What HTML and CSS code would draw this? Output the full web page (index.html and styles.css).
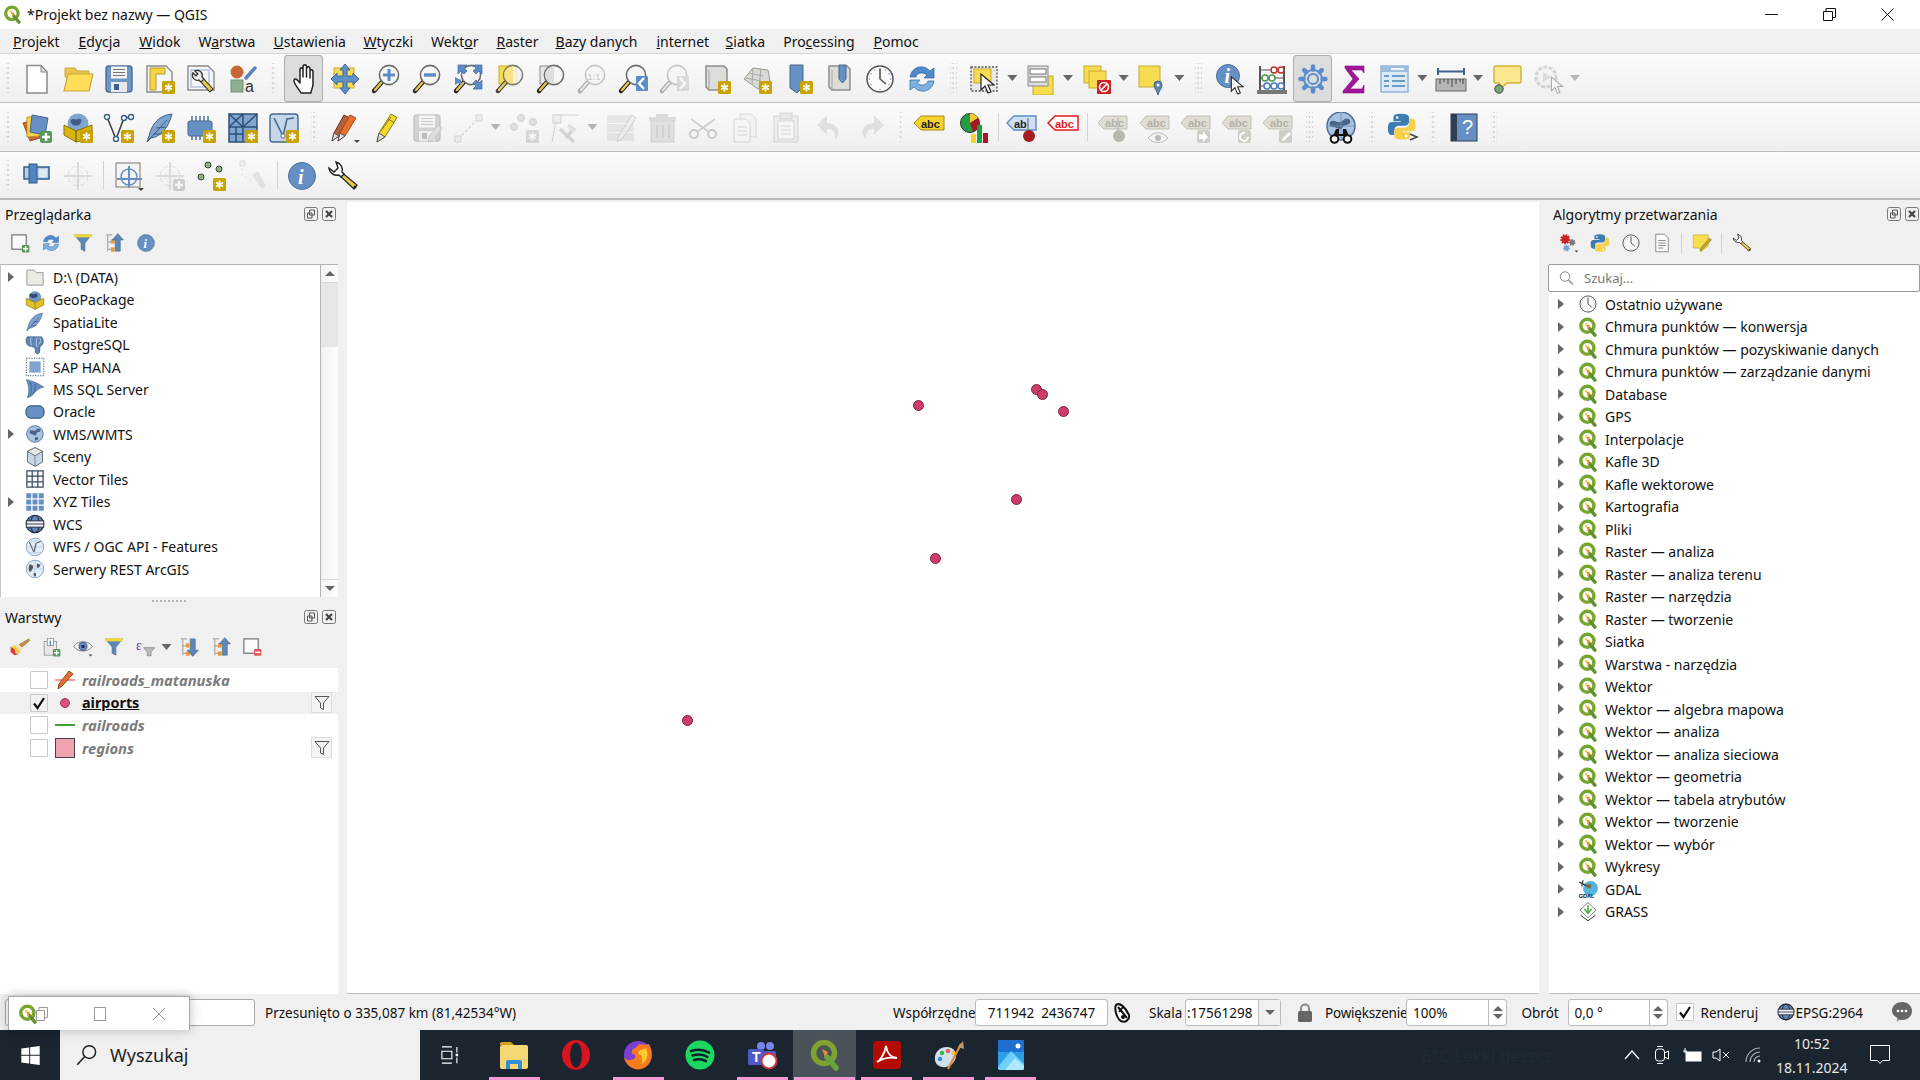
FILE: index.html
```html
<!DOCTYPE html>
<html lang="pl">
<head>
    <meta charset="UTF-8">
    <title>*Projekt bez nazwy — QGIS</title>
    <link rel="stylesheet" href="styles.css">
</head>
<body>
<svg class="sprite" xmlns="http://www.w3.org/2000/svg">
    <defs>
        <g id="g-star"><rect x="18" y="18" width="13" height="13" rx="1.5" fill="#c9a204"/><path d="M24.5 20.5v8M21 22.5l7 4M28 22.5l-7 4" stroke="#fff" stroke-width="1.7"/></g>
        <g id="g-mag"><path d="M12 19l-8 9" stroke="#222" stroke-width="4.4" stroke-linecap="round"/><path d="M11 20l-6 7" stroke="#e6c84c" stroke-width="2.4" stroke-linecap="round"/><circle cx="19" cy="12" r="9.6" fill="#f5f5f3" stroke="#6d6d6d" stroke-width="1.6"/></g>
        <g id="g-cursor"><path d="M17 12v16l4-4 3 7 3-1-3-7h6z" fill="#fff" stroke="#222" stroke-width="1.2"/></g>
        <g id="g-plus"><rect x="19" y="19" width="12" height="12" rx="2" fill="#589a5b"/><path d="M25 21v8M21 25h8" stroke="#fff" stroke-width="2.4"/></g>
        <g id="g-scroll"><path d="M6 3h18l3 3v21H9l-3-3z" fill="#dcdcd8" stroke="#8c8c8c" stroke-width="1.5"/><path d="M6 3v21M9 7v20" stroke="#a4a4a0"/></g>
        <g id="g-tag"><path d="M2 11l6-7h23v13H8z" fill="#e0ddd4" stroke="#c2bfb4"/><text x="9" y="15" class="tag-text" fill="#b3b0a6">abc</text></g>
        <g id="g-globe"><circle cx="16" cy="16" r="12.5" fill="#a8c3e2" stroke="#5a7ea8" stroke-width="1.5"/><path d="M8 11c4-2 5 1 8 0s3-4 7-3c3 2 1 5-2 5s-2 4-4 5-4-2-6-2-4-2-3-5zM17 21c2-1 4 0 4 2s-2 3-4 3-1-4 0-5z" fill="#49658a"/></g>
        <path id="g-caret" d="M25 28h6l-3 3z" fill="#444"/>
    </defs>

    <symbol id="new" viewBox="0 0 32 32"><path d="M6 2.5h14l6 6.5v21H6z" fill="#fff" stroke="#8a8a8a" stroke-width="1.5"/><path d="M20 3v6h6z" fill="#ddd" stroke="#8a8a8a"/></symbol>
    <symbol id="open" viewBox="0 0 32 32"><path d="M3 5h10l2 3h12v6H3z" fill="#e9c64a" stroke="#c9a73d"/><path d="M6 11h25l-4 17H2z" fill="#ffdd58" stroke="#c9a73d" stroke-width="1.2"/></symbol>
    <symbol id="save" viewBox="0 0 32 32"><rect x="3" y="3" width="26" height="26" rx="3" fill="#6e97c6" stroke="#4c6d95" stroke-width="1.4"/><rect x="8" y="3.5" width="16" height="12" fill="#f2f2f2"/><path d="M10 6.5h12M10 9.5h12M10 12.5h12" stroke="#777"/><rect x="8" y="19" width="16" height="10" fill="#e8e8e8"/><rect x="11" y="21" width="5" height="6" fill="#3e5f88"/></symbol>
    <symbol id="layout-new" viewBox="0 0 32 32"><path d="M3 3h19l6 6v20H3z" fill="#f6f6f6" stroke="#8a8a8a" stroke-width="1.4"/><path d="M6 5h15v6H12v16H6z" fill="#f5d547" stroke="#b79a22"/><use href="#g-star"/></symbol>
    <symbol id="layout-mgr" viewBox="0 0 32 32"><path d="M3 3h20l6 6v18H3z" fill="#f6f6f6" stroke="#8a8a8a" stroke-width="1.4"/><rect x="6" y="7" width="18" height="17" fill="none" stroke="#a9c0e2" stroke-width="1.4"/><path d="M10 8a5 5 0 0 1 7 6l11 12-3 3-11-12a5 5 0 0 1-6-7l3 3 2-2z" fill="#e6c84c" stroke="#333" stroke-width="1.1"/><path d="M10 8a5 5 0 0 1 7 6l2 2-3 3-2-2a5 5 0 0 1-6-7l3 3 2-2z" fill="#eee" stroke="#333" stroke-width="1.1"/></symbol>
    <symbol id="styles" viewBox="0 0 32 32"><circle cx="10" cy="9" r="6.5" fill="#c8673a"/><path d="M19 15L28 5" stroke="#5a86bb" stroke-width="3.5" stroke-linecap="round"/><rect x="4" y="17" width="12" height="12" fill="#8fb08e" stroke="#6f9070"/><text x="18" y="29" class="icon-a">a</text></symbol>
    <symbol id="hand" viewBox="-2 0 32 32"><path d="M11 30C9 26 3 20 4 17c1-2 3-1 6 3V7c0-3 3-3 3 0v7-10c0-3 3.5-3 3.5 0v10V6c0-3 3.5-3 3.5 0v9-6c0-3 3-3 3 0v12c0 4-2 6-2 9z" fill="#fff" stroke="#222" stroke-width="1.5" stroke-linejoin="round"/></symbol>
    <symbol id="pan-sel" viewBox="0 0 32 32"><rect x="5" y="5" width="20" height="20" fill="#f7dc4f" stroke="#c7ab30"/><path d="M16 1l5 6h-3v6h6v-3l6 6-6 6v-3h-6v6h3l-5 6-5-6h3v-6H8v3l-6-6 6-6v3h6V7h-3z" fill="#5f90c6" stroke="#3e6a9e"/></symbol>
    <symbol id="zoom-in" viewBox="0 0 32 32"><use href="#g-mag"/><path d="M19 6v12M13 12h12" stroke="#5b8cc6" stroke-width="3"/></symbol>
    <symbol id="zoom-out" viewBox="0 0 32 32"><use href="#g-mag"/><path d="M13 12h12" stroke="#5b8cc6" stroke-width="3.4"/></symbol>
    <symbol id="zoom-full" viewBox="0 0 32 32"><use href="#g-mag"/><path d="M6 2h9l-3 3 3 3-3 3-3-3-3 3V2zM30 2v9l-3-3-3 3-3-3 3-3-3-3zM30 26h-9l3-3-3-3 3-3 3 3 3-3z" fill="#5b8cc6" stroke="#3e6a9e" stroke-width=".7"/><path d="M3 14v8l3-2 3 2v-5z" fill="#5b8cc6"/></symbol>
    <symbol id="zoom-sel" viewBox="0 0 32 32"><rect x="5" y="3" width="18" height="18" fill="#f7dc4f" stroke="#c7ab30"/><use href="#g-mag" opacity=".85"/><path d="M19 3a9 9 0 0 0 0 18z" fill="#f7dc4f" opacity=".6"/></symbol>
    <symbol id="zoom-layer" viewBox="0 0 32 32"><rect x="5" y="3" width="18" height="18" fill="#e6e6e6" stroke="#8a8a8a"/><use href="#g-mag"/><path d="M19 3a9 9 0 0 0 0 18z" fill="#ddd"/></symbol>
    <symbol id="zoom-native" viewBox="0 0 32 32"><use href="#g-mag"/><text x="11.5" y="16.5" class="icon-11">1:1</text></symbol>
    <symbol id="zoom-last" viewBox="0 0 32 32"><use href="#g-mag"/><rect x="19" y="13" width="12" height="15" rx="1" fill="#5b8cc6"/><path d="M27 15l-5 5.5 5 5.5" fill="none" stroke="#fff" stroke-width="2.4"/></symbol>
    <symbol id="zoom-next" viewBox="0 0 32 32"><use href="#g-mag"/><rect x="19" y="13" width="12" height="15" rx="1" fill="#aaa"/><path d="M22 15l5 5.5-5 5.5" fill="none" stroke="#fff" stroke-width="2.4"/></symbol>
    <symbol id="map-new" viewBox="0 0 32 32"><use href="#g-scroll"/><use href="#g-star"/></symbol>
    <symbol id="map-3d" viewBox="0 0 32 32"><path d="M3 16L12 5l15 2 2 11-12 8z" fill="#d9d9d5" stroke="#9a9a96"/><path d="M8 10l14 3M5 15l15 3M12 5l-1 17M20 6l-2 19" stroke="#a8a8a4"/><use href="#g-star"/></symbol>
    <symbol id="bm-new" viewBox="0 0 32 32"><path d="M8 2h13v22l-6 6-7-5z" fill="#6690c4" stroke="#44678f"/><use href="#g-star"/></symbol>
    <symbol id="bm-show" viewBox="0 0 32 32"><use href="#g-scroll"/><path d="M16 2h7v14l-3.5 4-3.5-4z" fill="#6690c4" stroke="#44678f"/></symbol>
    <symbol id="clock" viewBox="0 0 32 32"><circle cx="16" cy="16" r="13" fill="#fafafa" stroke="#555" stroke-width="1.5"/><path d="M16 6v10l6 5" fill="none" stroke="#555" stroke-width="1.6"/><path d="M16 5v1M16 26v1M5 16h1M26 16h1M10.5 6.5l.5 1M21.5 6.5l-.5 1M6.5 10.5l1 .5M6.5 21.5l1-.5M25.5 10.5l-1 .5M25.5 21.5l-1-.5" stroke="#5b8cc6" stroke-width="1.3"/></symbol>
    <symbol id="refresh" viewBox="0 0 32 32"><path d="M4 14C5 7 11 3 17 4c3 .5 5 2 7 4l4-3v10H18l3-3c-3-3-10-3-11 2z" fill="#4f8bc9" stroke="#3a6ea5" stroke-width=".8"/><path d="M28 18c-1 7-7 11-13 10-3-.5-5-2-7-4l-4 3V17h10l-3 3c3 3 10 3 11-2z" fill="#7fb0de" stroke="#3a6ea5" stroke-width=".8"/></symbol>
    <symbol id="select" viewBox="0 0 32 32"><rect x="2" y="4" width="26" height="24" fill="#e8e8e8" stroke="#555" stroke-dasharray="2 1.5" stroke-width="1.3"/><rect x="5" y="6" width="17" height="14" fill="#f7dc4f" stroke="#c7ab30"/><use href="#g-cursor" transform="translate(-5 -1)"/></symbol>
    <symbol id="select-attr" viewBox="0 0 32 32"><rect x="8" y="13" width="20" height="19" fill="#f7dc4f" stroke="#c7ab30"/><rect x="3" y="3" width="20" height="20" fill="#dfdfdf" stroke="#8a8a8a"/><rect x="5" y="6" width="16" height="5" fill="#fff" stroke="#777"/><rect x="5" y="14" width="16" height="5" fill="#fff" stroke="#777"/></symbol>
    <symbol id="deselect" viewBox="0 0 32 32"><rect x="3" y="3" width="17" height="17" fill="#f7dc4f" stroke="#c7ab30"/><rect x="8" y="8" width="17" height="17" fill="#f7dc4f" stroke="#c7ab30"/><rect x="16" y="17" width="14" height="14" rx="1" fill="#cf1f26"/><circle cx="23" cy="24" r="4.5" fill="none" stroke="#fff" stroke-width="1.7"/><path d="M20 27l6-6" stroke="#fff" stroke-width="1.7"/></symbol>
    <symbol id="select-loc" viewBox="0 0 32 32"><rect x="3" y="3" width="21" height="21" fill="#f7dc4f" stroke="#c7ab30"/><path d="M22 32c-1-5-4-6-4-10a4 4 0 0 1 8 0c0 4-3 5-4 10z" fill="#5c87a8" stroke="#44678f"/><circle cx="22" cy="22" r="1.5" fill="#fff"/></symbol>
    <symbol id="identify" viewBox="0 0 32 32"><circle cx="14" cy="13" r="11.5" fill="#6690c4" stroke="#49709f"/><text x="10.5" y="20" class="icon-i">i</text><use href="#g-cursor" transform="translate(2 3) scale(.9)"/></symbol>
    <symbol id="abacus" viewBox="0 0 32 32"><path d="M4 3v26M28 3v26" stroke="#555" stroke-width="2"/><rect x="1" y="27" width="30" height="4" fill="#777"/><path d="M4 7h24M4 15h24M4 23h24" stroke="#555"/><g fill="#fff" stroke="#b8312f" stroke-width="1.5"><circle cx="18" cy="7" r="3"/><circle cx="25" cy="7" r="3"/></g><g fill="#fff" stroke="#4c9a50" stroke-width="1.5"><circle cx="9" cy="15" r="3"/><circle cx="16" cy="15" r="3"/></g><g fill="#fff" stroke="#4c7cc0" stroke-width="1.5"><circle cx="11" cy="23" r="3"/><circle cx="18" cy="23" r="3"/><circle cx="25" cy="23" r="3"/></g></symbol>
    <symbol id="gear" viewBox="0 0 32 32"><g fill="none" stroke="#5b8ccc" stroke-width="2"><circle cx="16" cy="16" r="5"/><circle cx="16" cy="16" r="9"/><path stroke-width="4.5" stroke-linecap="round" d="M16 3.500v3M16 25.500v3M3.500 16h3M25.500 16h3M7.200 7.200l2 2M22.800 22.800l2 2M24.800 7.200l-2 2M9.200 22.800l-2 2"/></g></symbol>
    <symbol id="sigma" viewBox="0 0 32 32"><path d="M7 3h19v7l-2-3H13l8 9-9 10h12l2-4v8H5v-2l10-12L7 5z" fill="#a3149c" stroke="#7c0f77" stroke-width=".6"/></symbol>
    <symbol id="table" viewBox="0 0 32 32"><rect x="2" y="3" width="27" height="26" fill="#dceaf7" stroke="#8ab0d6" stroke-width="1.4"/><rect x="2" y="3" width="27" height="6" fill="#9bbde0"/><path d="M5 13h5M13 13h13M5 18h5M13 18h13M5 23h5M13 23h13" stroke="#6d9ac8" stroke-width="2"/><rect x="12" y="5" width="13" height="2" fill="#eef5fb"/></symbol>
    <symbol id="ruler" viewBox="0 0 32 32"><path d="M3 5v7M29 5v7M3 8.500h26" stroke="#3e5f88" stroke-width="2"/><rect x="1" y="16" width="30" height="12" fill="#b5b5b5" stroke="#666"/><path d="M5 16v5M9 16v3M13 16v5M17 16v8M21 16v5M25 16v3M28 16v5" stroke="#444"/></symbol>
    <symbol id="tip" viewBox="0 0 32 32"><path d="M5 3h23a2 2 0 0 1 2 2v13a2 2 0 0 1-2 2H16l-8 7v-7H5a2 2 0 0 1-2-2V5a2 2 0 0 1 2-2z" fill="#fbe78f" stroke="#d2b437" stroke-width="1.5"/><circle cx="8" cy="26" r="4.2" fill="#77a877" stroke="#444"/></symbol>
    <symbol id="gear-play" viewBox="0 0 32 32"><circle cx="14" cy="14" r="10" fill="#eee" stroke="#999" stroke-width="3" stroke-dasharray="4 1.5"/><path d="M11 9l8 5-8 5z" fill="#aaa"/><use href="#g-cursor" transform="translate(5 4) scale(.85)"/></symbol>

    <symbol id="dsm" viewBox="0 0 32 32"><path d="M2 11l10-3 7 18-10 3z" fill="#c8673a" stroke="#9c4e2c"/><path d="M6 5l12 0v19l-12 1z" fill="#f5d547" stroke="#b79a22"/><path d="M11 3l16 3-3 17-15-3z" fill="#6690c4" stroke="#44678f"/><use href="#g-plus"/></symbol>
    <symbol id="gpkg" viewBox="0 0 32 32"><circle cx="16" cy="12" r="10.5" fill="#7fa4cf"/><path d="M10 7c3 0 4 1 7 0s3 3 1 5-6 2-8 0-2-4 0-5z" fill="#3d5d86"/><path d="M2 13l12 6 16-6v13l-16 4L2 23z" fill="#d8b40f" stroke="#8a7208"/><path d="M14 19v11" stroke="#5d4e05"/><use href="#g-star"/></symbol>
    <symbol id="shp" viewBox="0 0 32 32"><path d="M4 5l9 22 8-21 7-1" fill="none" stroke="#444" stroke-width="1.6"/><g fill="#fff" stroke="#3e5f88" stroke-width="1.4"><circle cx="4" cy="5" r="2.5"/><circle cx="13" cy="27" r="2.5"/><circle cx="21" cy="6" r="2.5"/><circle cx="28" cy="5" r="2.5"/></g><use href="#g-star"/></symbol>
    <symbol id="feather" viewBox="0 0 32 32"><path d="M28 2C16 3 8 11 5 24l-2 6 3-4c8 0 18-8 22-24z" fill="#7fa4cf" stroke="#3e5f88"/><path d="M3 30L23 8M9 22l10 0M12 16l10-1" stroke="#3e5f88" fill="none"/></symbol>
    <symbol id="spatialite" viewBox="0 0 32 32"><use href="#feather"/><use href="#g-star"/></symbol>
    <symbol id="chip" viewBox="0 0 32 32"><rect x="3" y="9" width="24" height="15" rx="2" fill="#6690c4" stroke="#44678f"/><path d="M7 4v5M11 4v5M15 4v5M19 4v5M23 4v5M7 24v4M11 24v4M15 24v4" stroke="#44678f" stroke-width="1.4"/><use href="#g-star"/></symbol>
    <symbol id="mesh" viewBox="0 0 32 32"><rect x="2" y="2" width="28" height="28" fill="#7fa4cf" stroke="#2f4f76" stroke-width="1.5"/><path d="M2 15h28M16 2v28M2 2l14 13M16 2L2 15M30 2L16 15M9 15v15M2 22h14" stroke="#2f4f76" stroke-width="1.5"/><use href="#g-star"/></symbol>
    <symbol id="virtual" viewBox="0 0 32 32"><rect x="2" y="2" width="28" height="28" rx="3" fill="#c6d6ea" stroke="#44678f" stroke-width="1.4"/><path d="M6 6l9 18 4-17 7-1" fill="none" stroke="#44678f" stroke-width="1.6"/><circle cx="15" cy="24" r="2.2" fill="#fff" stroke="#44678f"/><use href="#g-star"/></symbol>
    <symbol id="pencils" viewBox="0 0 32 32"><path d="M3 29l2-8L15 3l6 3-11 18z" fill="#b0623a" stroke="#6c3b22"/><path d="M9 29l2-8L21 3l6 3-11 18z" fill="#e8702a" stroke="#a44a17"/><path d="M3 29l2-8 5 3zM9 29l2-8 5 3z" fill="#ddd" stroke="#555"/><use href="#g-caret"/></symbol>
    <symbol id="pencil" viewBox="0 0 32 32"><path d="M7 30l2-9L21 2l6 3.500L15 25z" fill="#f3d92e" stroke="#8d7d17"/><path d="M7 30l2-9 6 4z" fill="#ddd" stroke="#555"/><path d="M18 7l6 3.500M11 19l10-14" stroke="#8d7d17"/></symbol>
    <symbol id="save-edits" viewBox="0 0 32 32"><use href="#save"/><path d="M17 30l1-5 9-12 4 3-9 12z" fill="#bbb" stroke="#777"/></symbol>
    <symbol id="add-line" viewBox="0 0 32 32"><path d="M6 27L27 6" stroke="#999" stroke-dasharray="3 2" fill="none" stroke-width="1.4"/><rect x="3" y="24" width="6" height="6" fill="#ddd" stroke="#999"/><rect x="24" y="3" width="6" height="6" fill="#ddd" stroke="#999"/></symbol>
    <symbol id="add-pts" viewBox="0 0 32 32"><g fill="#bbb" stroke="#888"><circle cx="6" cy="15" r="3.5"/><circle cx="13" cy="6" r="3.5"/><circle cx="25" cy="10" r="3.5"/></g><use href="#g-star"/></symbol>
    <symbol id="vertex" viewBox="0 0 32 32"><path d="M3 30l5-27h22" fill="none" stroke="#888"/><rect x="4" y="3" width="8" height="8" fill="#ddd" stroke="#888"/><path d="M11 17l14 13M17 26l8-10" stroke="#999" stroke-width="3.5"/><path d="M20 12l8 5-4 4-6-6z" fill="#bbb"/></symbol>
    <symbol id="edit-table" viewBox="0 0 32 32"><rect x="2" y="3" width="27" height="8" fill="#ccc8ba"/><rect x="2" y="12" width="27" height="8" fill="#ccc8ba"/><rect x="2" y="21" width="27" height="8" fill="#ccc8ba"/><path d="M12 30l2-7L27 3l4 3-13 20z" fill="#ddd" stroke="#888"/></symbol>
    <symbol id="trash" viewBox="0 0 32 32"><rect x="5" y="9" width="23" height="21" fill="#c9b8b0" stroke="#9f8d85"/><path d="M3 5h27v4H3zM10 2h12v3H10z" fill="#b8a59c"/><path d="M11 13v13M17 13v13M23 13v13" stroke="#a08f87" stroke-width="2"/></symbol>
    <symbol id="cut" viewBox="0 0 32 32"><circle cx="7" cy="22" r="4" fill="none" stroke="#777" stroke-width="1.8"/><circle cx="25" cy="22" r="4" fill="none" stroke="#777" stroke-width="1.8"/><path d="M10 20L28 7M22 20L4 7" stroke="#888" stroke-width="2"/></symbol>
    <symbol id="copy" viewBox="0 0 32 32"><path d="M11 2h11l5 5v18H11z" fill="#eee" stroke="#999"/><path d="M5 7h12l4 4v19H5z" fill="#f8f8f8" stroke="#999"/><path d="M8 15h10M8 19h10M8 23h10" stroke="#999"/></symbol>
    <symbol id="paste" viewBox="0 0 32 32"><rect x="4" y="4" width="24" height="26" fill="#ddd" stroke="#999"/><rect x="8" y="9" width="16" height="18" fill="#fafafa" stroke="#999"/><rect x="10" y="1" width="12" height="6" fill="#ccc" stroke="#999"/><path d="M11 14h10M11 18h10M11 22h10" stroke="#999"/></symbol>
    <symbol id="undo" viewBox="0 0 32 32"><path d="M13 3L3 13l10 10v-6c5 0 9 2 8 11 5-5 6-16-8-17z" fill="#bbb8ae"/></symbol>
    <symbol id="redo" viewBox="0 0 32 32"><path d="M19 3l10 10-10 10v-6c-5 0-9 2-8 11-5-5-6-16 8-17z" fill="#bbb8ae"/></symbol>
    <symbol id="lbl-yellow" viewBox="0 0 32 32"><path d="M1 11l7-7h23v14H8z" fill="#f5d22e" stroke="#a38a10"/><text x="8" y="15.5" class="tag-text" fill="#222">abc</text></symbol>
    <symbol id="diagram" viewBox="0 0 32 32"><circle cx="11" cy="11" r="9.500" fill="#1f9e44" stroke="#333"/><path d="M11 11V1.500A9.500 9.500 0 0 1 19 6z" fill="#f5c92e"/><path d="M11 11l8-5a9.500 9.500 0 0 1-5 14z" fill="#a8171d"/><rect x="12" y="22" width="5" height="9" fill="#f5d22e"/><rect x="18" y="13" width="5" height="18" fill="#1f9e44"/><rect x="24" y="21" width="5" height="10" fill="#a8171d"/></symbol>
    <symbol id="lbl-pin" viewBox="0 0 32 32"><path d="M1 11l7-7h22v14H8z" fill="#cfe0f4" stroke="#5b8cc6" stroke-width="1.4"/><text x="8" y="15.5" class="tag-text" fill="#222">ab</text><path d="M22 6v15" stroke="#888" stroke-width="1.5"/><circle cx="23" cy="24" r="6" fill="#a31d25"/></symbol>
    <symbol id="lbl-red" viewBox="0 0 32 32"><path d="M1 11l7-7h23v14H8z" fill="#fff" stroke="#e21b1b" stroke-width="1.5"/><text x="8" y="15.5" class="tag-text" fill="#e21b1b">abc</text></symbol>
    <symbol id="lbl-off-pin" viewBox="0 0 32 32"><use href="#g-tag"/><path d="M22 6v15" stroke="#bbb" stroke-width="1.5"/><circle cx="23" cy="24" r="6" fill="#bab7ae"/></symbol>
    <symbol id="lbl-off-eye" viewBox="0 0 32 32"><use href="#g-tag"/><path d="M10 26c6-7 14-7 20 0-6 6-14 6-20 0z" fill="#f4f4f4" stroke="#bbb"/><circle cx="20" cy="26" r="3" fill="#bbb"/></symbol>
    <symbol id="lbl-off-move" viewBox="0 0 32 32"><use href="#g-tag"/><rect x="18" y="18" width="13" height="13" rx="2" fill="#cfcdc6"/><path d="M20 22.500h4v-3l5 5.500-5 5v-3h-4z" fill="#fff"/></symbol>
    <symbol id="lbl-off-rot" viewBox="0 0 32 32"><use href="#g-tag"/><rect x="18" y="18" width="13" height="13" rx="2" fill="#cfcdc6"/><path d="M28 25a4 4 0 1 1-3-4" fill="none" stroke="#fff" stroke-width="2"/></symbol>
    <symbol id="lbl-off-edit" viewBox="0 0 32 32"><use href="#g-tag"/><rect x="18" y="18" width="13" height="13" rx="2" fill="#cfcdc6"/><path d="M21 29l1-3 6-6 2 2-6 6z" fill="#fff"/></symbol>
    <symbol id="binoc" viewBox="0 0 32 32"><circle cx="16" cy="14" r="14" fill="#a8c3e2" stroke="#4f6f96" stroke-width="1.500"/><path d="M5 10c5-3 6 1 10 0s4-5 9-3c3 3 0 6-3 6s-3 3-5 4-5-2-8-2-4-2-3-5z" fill="#49658a"/><path d="M2 14h28M16 0v28" stroke="#6f8fb5" stroke-width=".8"/><path d="M8 24l3-7h3v5h4v-5h3l3 7z" fill="#111"/><circle cx="9.500" cy="27" r="3.800" fill="#fff" stroke="#111" stroke-width="2"/><circle cx="22.500" cy="27" r="3.800" fill="#fff" stroke="#111" stroke-width="2"/></symbol>
    <symbol id="python" viewBox="0 0 32 32"><path d="M15 2c-5 0-8 1-8 4v4h8v1H5c-3 0-4 3-4 7s1 7 4 7h3v-5c0-3 2-5 5-5h7c2 0 4-2 4-4V6c0-3-4-4-9-4z" fill="#3d7cb3"/><path d="M17 30c5 0 8-1 8-4v-4h-8v-1h10c3 0 4-3 4-7s-1-7-4-7h-3v5c0 3-2 5-5 5h-7c-2 0-4 2-4 4v5c0 3 4 4 9 4z" fill="#f7d04b"/><circle cx="11" cy="6" r="1.400" fill="#fff"/><circle cx="21" cy="26" r="1.400" fill="#fff"/></symbol>
    <symbol id="py-console" viewBox="0 0 32 32"><use href="#python" transform="scale(.92)"/><path d="M23 22l7 3-7 3" fill="none" stroke="#444" stroke-width="1.500"/></symbol>
    <symbol id="help" viewBox="0 0 32 32"><rect x="3" y="2" width="26" height="27" fill="#6690c4" stroke="#2f3f55"/><rect x="3" y="2" width="6" height="27" fill="#2f3f55"/><text x="14" y="22" class="icon-help">?</text></symbol>
    <symbol id="capture" viewBox="0 0 32 32"><rect x="3" y="7" width="25" height="12" fill="#b7cfe8" stroke="#2f5b8a" stroke-width="1.500"/><rect x="8" y="4" width="8" height="19" fill="#4f84bd" stroke="#2f5b8a"/><rect x="18" y="9" width="8" height="8" fill="#dde9f5"/></symbol>
    <symbol id="target" viewBox="0 0 32 32"><circle cx="16" cy="16" r="10" fill="none" stroke="#aaa" stroke-dasharray="5 3"/><circle cx="16" cy="16" r="5" fill="none" stroke="#bbb" stroke-dasharray="3 2"/><path d="M16 2v28M2 16h28" stroke="#aaa" stroke-width="2"/></symbol>
    <symbol id="georef" viewBox="0 0 32 32"><rect x="3" y="3" width="24" height="24" fill="#f4f4f4" stroke="#777"/><circle cx="16" cy="17" r="8" fill="none" stroke="#6690c4" stroke-width="1.500"/><path d="M16 6v22M4 19h25" stroke="#6690c4" stroke-width="2"/><use href="#g-caret"/></symbol>
    <symbol id="target-add" viewBox="0 0 32 32"><use href="#target"/><use href="#g-plus"/></symbol>
    <symbol id="pts-star" viewBox="0 0 32 32"><circle cx="6" cy="17" r="3" fill="#8ab57a" stroke="#444"/><circle cx="13" cy="5" r="3" fill="#8ab57a" stroke="#444"/><circle cx="24" cy="9" r="3" fill="#8ab57a" stroke="#444"/><use href="#g-star"/></symbol>
    <symbol id="line-pin" viewBox="0 0 32 32"><path d="M5 3v12l10 6" stroke="#bbb" stroke-dasharray="3 2" fill="none"/><rect x="3" y="1" width="5" height="5" fill="#ddd" stroke="#aaa"/><path d="M15 15l6-4 8 15-4 3z" fill="#c4c1b8"/></symbol>
    <symbol id="info" viewBox="0 0 32 32"><circle cx="16" cy="16" r="13.500" fill="#6690c4" stroke="#49709f"/><text x="12" y="24" class="icon-i">i</text></symbol>
    <symbol id="wrench" viewBox="0 0 32 32"><path d="M13 11L30 25l-3 4L11 14z" fill="#e6c84c" stroke="#222" stroke-width="1.200"/><path d="M9 2a8 8 0 0 1 6 10l2 2-3 3-2-2A8 8 0 0 1 2 8l5 4 4-4z" fill="#fff" stroke="#222" stroke-width="1.400"/><circle cx="28" cy="27" r="1.500" fill="#222"/></symbol>

    <symbol id="add-sq" viewBox="0 0 32 32"><rect x="3" y="3" width="23" height="23" fill="#fafafa" stroke="#777" stroke-width="2"/><use href="#g-plus"/></symbol>
    <symbol id="rem-sq" viewBox="0 0 32 32"><rect x="3" y="3" width="23" height="23" fill="#fafafa" stroke="#777" stroke-width="2"/><rect x="19" y="19" width="12" height="11" rx="2" fill="#e2595f"/><path d="M21 24.500h8" stroke="#fff" stroke-width="2.400"/></symbol>
    <symbol id="funnel" viewBox="0 0 32 32"><path d="M2 3h28L19 16v13l-6-3V16z" fill="#5f87b6" stroke="#44678f"/><rect x="2" y="2" width="28" height="5" fill="#f2d63d"/></symbol>
    <symbol id="collapse" viewBox="0 0 32 32"><path d="M3 3h10M6 3v26M6 14h7M6 26h7" stroke="#aaa" stroke-width="2" fill="none"/><rect x="11" y="10" width="6" height="7" fill="#ec9b3b"/><rect x="11" y="23" width="6" height="7" fill="#ec9b3b"/><path d="M22 1l9 10h-5v18h-8V11h-5z" fill="#5f87b6" stroke="#44678f"/></symbol>
    <symbol id="expand" viewBox="0 0 32 32"><path d="M3 3h10M6 3v26M6 14h7M6 26h7" stroke="#aaa" stroke-width="2" fill="none"/><rect x="11" y="10" width="6" height="7" fill="#ec9b3b"/><rect x="11" y="23" width="6" height="7" fill="#ec9b3b"/><path d="M22 31l9-10h-5V3h-8v18h-5z" fill="#5f87b6" stroke="#44678f"/></symbol>
    <symbol id="paint" viewBox="0 0 32 32"><path d="M15 12L30 3l1 3-13 11z" fill="#c5963f" stroke="#86632a"/><path d="M1 16l12-5 7 7-6 9z" fill="#f3cc3d"/><path d="M1 16l6 3 2 7 5 1-7 2-6-5z" fill="#dd3d3d"/><path d="M7 13l6-2 7 7-3 5z" fill="#e9e2c8"/></symbol>
    <symbol id="addgrp" viewBox="0 0 32 32"><rect x="5" y="7" width="20" height="22" fill="#e8e8e8" stroke="#777"/><rect x="10" y="2" width="10" height="12" fill="#f5f5f5" stroke="#777"/><path d="M15 6v8" stroke="#5b8cc6" stroke-width="2"/><use href="#g-plus"/></symbol>
    <symbol id="eye" viewBox="0 0 32 32"><path d="M1 15C8 5 24 5 31 15 24 25 8 25 1 15z" fill="#f2f2f2" stroke="#777" stroke-width="1.400"/><circle cx="16" cy="15" r="6.500" fill="#5b8cc6" stroke="#334"/><circle cx="16" cy="15" r="2.500" fill="#223"/><use href="#g-caret"/></symbol>
    <symbol id="epsilon" viewBox="0 0 32 32"><text x="0" y="20" class="icon-eps">ε</text><path d="M12 17h18l-6 7v6h-6v-6z" fill="#bbb" stroke="#777"/></symbol>
    <symbol id="funnel-o" viewBox="0 0 32 32"><path d="M2 3h28L19 16v13l-6-3V16z" fill="#f0f0f0" stroke="#555" stroke-width="2"/></symbol>
    <symbol id="gears" viewBox="0 0 32 32"><circle cx="10" cy="10" r="6" fill="#cf1f26" stroke="#cf1f26" stroke-width="4" stroke-dasharray="2.500 1.500"/><circle cx="21" cy="15" r="4" fill="#777" stroke="#777" stroke-width="3" stroke-dasharray="2 1.500"/><circle cx="12" cy="24" r="4" fill="#7c9fd4" stroke="#7c9fd4" stroke-width="3" stroke-dasharray="2 1.500"/><use href="#g-caret"/></symbol>
    <symbol id="doc" viewBox="0 0 32 32"><path d="M6 2h14l6 6v22H6z" fill="#fafafa" stroke="#888" stroke-width="1.500"/><path d="M10 12h12M10 16h12M10 20h12M10 24h8" stroke="#888" stroke-width="1.500"/></symbol>
    <symbol id="note" viewBox="0 0 32 32"><path d="M2 3h24v18L14 30l-2-6H2z" fill="#f7dc4f" stroke="#c7ab30"/><path d="M13 29l2-6L28 8l3 3-13 14z" fill="#bba73c" stroke="#8d7d17"/></symbol>
    <symbol id="magn-grey" viewBox="0 0 32 32"><circle cx="14" cy="13" r="9.500" fill="#fff" stroke="#8a8a8a" stroke-width="2"/><path d="M21 20l9 9" stroke="#8a8a8a" stroke-width="2.500"/></symbol>

    <symbol id="b-folder" viewBox="0 0 32 32"><path d="M3 5h12l3 4h11v20H3z" fill="#eceae4" stroke="#989898" stroke-width="1.500"/></symbol>
    <symbol id="b-gpkg" viewBox="0 0 32 32"><circle cx="16" cy="12" r="10" fill="#6e97c6"/><path d="M9 6c4 0 5 2 8 0s4 3 2 5-7 3-10 0-2-4 0-5z" fill="#304d73"/><path d="M2 13l14 7 14-7v11l-14 7-14-7z" fill="#e2c027" stroke="#8a7208"/><path d="M16 20v11" stroke="#8a7208"/></symbol>
    <symbol id="b-pg" viewBox="0 0 32 32"><path d="M4 3h22c4 2 4 10 1 13l-3 2-1 10c-2 3-5 2-6 0l-1-8-6-2c-5 0-9-4-8-11 0-2 1-4 2-4z" fill="#5f87b6" stroke="#2f5b8a" stroke-width="1.400"/><path d="M10 4c-2 5-1 10 1 13M20 4c-3 5-2 11-1 15M23 4c3 4 2 8-1 11" stroke="#e7eef6" fill="none"/></symbol>
    <symbol id="b-hana" viewBox="0 0 32 32"><rect x="2" y="2" width="28" height="28" fill="none" stroke="#3e5f88" stroke-width="1.600" stroke-dasharray="2 2"/><rect x="7" y="7" width="18" height="18" fill="#7fa4cf"/></symbol>
    <symbol id="b-mssql" viewBox="0 0 32 32"><path d="M2 1c10 2 20 6 28 12-8 1-14 7-18 13l-8 4c3-9 3-19-2-29z" fill="#6690c4" stroke="#2f5b8a"/><path d="M8 5c3 7 3 15 0 22M16 8c1 5 0 11-3 16" stroke="#2f4f76" fill="none"/></symbol>
    <symbol id="b-oracle" viewBox="0 0 32 32"><rect x="1.500" y="6" width="29" height="20" rx="8" fill="#6690c4" stroke="#2f4f76" stroke-width="1.600"/></symbol>
    <symbol id="b-globe" viewBox="0 0 32 32"><use href="#g-globe" transform="translate(-1 -1) scale(1.060)"/></symbol>
    <symbol id="b-cube" viewBox="0 0 32 32"><path d="M16 1l12 6v17l-12 7-12-7V7z" fill="#c6d6ea" stroke="#555" stroke-width="1.300"/><path d="M4 7l12 7 12-7M16 14v17" stroke="#555" fill="none"/><path d="M4 7l12 7 12-7-12-6z" fill="#e7e7e7" stroke="#555"/></symbol>
    <symbol id="b-grid" viewBox="0 0 32 32"><rect x="3" y="3" width="26" height="26" fill="#fafafa" stroke="#3a4b60" stroke-width="2"/><path d="M3 11.500h26M3 20.500h26M11.500 3v26M20.500 3v26" stroke="#3a4b60" stroke-width="2"/></symbol>
    <symbol id="b-xyz" viewBox="0 0 32 32"><g fill="#6690c4"><rect x="2" y="2" width="8" height="8"/><rect x="12" y="2" width="8" height="8"/><rect x="22" y="2" width="8" height="8"/><rect x="2" y="12" width="8" height="8"/><rect x="12" y="12" width="8" height="8"/><rect x="22" y="12" width="8" height="8"/><rect x="2" y="22" width="8" height="8"/><rect x="12" y="22" width="8" height="8"/><rect x="22" y="22" width="8" height="8"/></g></symbol>
    <symbol id="b-wcs" viewBox="0 0 32 32"><circle cx="16" cy="16" r="14" fill="#5f87b6" stroke="#223" stroke-width="1.800"/><ellipse cx="16" cy="16" rx="7" ry="14" fill="none" stroke="#223" stroke-width="1.600"/><rect x="2" y="11" width="28" height="10" fill="#eef3f8" stroke="#223" stroke-width="1.400"/><path d="M2 16h28" stroke="#223" stroke-width="1.400"/></symbol>
    <symbol id="b-wfs" viewBox="0 0 32 32"><circle cx="16" cy="16" r="14" fill="#e4edf7" stroke="#7fa4cf" stroke-width="1.500"/><path d="M2 16h28M16 2v28M6 7h20M6 25h20" stroke="#a9c3e0"/><path d="M7 8l7 16 4-14 7-3" fill="none" stroke="#444" stroke-width="1.500"/></symbol>
    <symbol id="b-arc" viewBox="0 0 32 32"><circle cx="16" cy="16" r="14" fill="#e4edf7" stroke="#7fa4cf" stroke-width="1.500"/><path d="M2 16h28M16 2v28" stroke="#a9c3e0"/><path d="M7 9c4-1 6 1 6 4s-2 3-3 6-4 1-4-2 0-6 1-8zM19 7l6 2-3 5h-3zM14 22l4 1-1 5-3-1z" fill="#555"/></symbol>

    <symbol id="q" viewBox="0 0 32 32"><circle cx="15" cy="14" r="10.500" fill="none" stroke="#77a62f" stroke-width="5.500"/><path d="M18 18l9 11" stroke="#5f9130" stroke-width="5.500" stroke-linecap="round"/><path d="M12 11l7 2-2 7z" fill="#f2913a"/><circle cx="13" cy="11" r="2" fill="#f5d547"/></symbol>
    <symbol id="gdal" viewBox="0 0 32 32"><circle cx="20" cy="15" r="12" fill="#56b4e0"/><path d="M2 5l14 7M8 2L6 12" stroke="#333" stroke-width="2"/><path d="M15 8h6v7h-6z" fill="#8a6a3a"/><text x="1" y="30" class="icon-gdal">GDAL</text></symbol>
    <symbol id="grass" viewBox="0 0 32 32"><path d="M16 1l13 12-13 12L3 13z" fill="#fff" stroke="#555" stroke-width="1.200"/><path d="M16 5v13M10 11l6 7 6-7" stroke="#3fae3b" stroke-width="2.400" fill="none"/><path d="M4 21l12 9 12-9" fill="none" stroke="#333" stroke-width="1.600"/></symbol>

    <symbol id="win" viewBox="0 0 32 32"><path d="M2 5.500l12-1.700V15H2zM15.500 3.600L30 1.500V15H15.500zM2 16.500h12v11.700L2 26.500zM15.500 16.500H30v14l-14.500-2z" fill="#fff"/></symbol>
    <symbol id="searchglass" viewBox="0 0 32 32"><circle cx="19" cy="12" r="8.500" fill="none" stroke="#222" stroke-width="2"/><path d="M13 18L3 29" stroke="#222" stroke-width="2.200"/></symbol>
    <symbol id="taskview" viewBox="0 0 32 32"><path d="M3 3h16M3 29h16M3 10h16v12H3z" fill="none" stroke="#fff" stroke-width="1.800"/><path d="M27 3v9M27 20v9" stroke="#fff" stroke-width="1.800"/><rect x="25" y="14" width="4" height="4" fill="#fff"/></symbol>
    <symbol id="explorer" viewBox="0 0 32 32"><path d="M2 5a2 2 0 0 1 2-2h9l3 3h-14z" fill="#d79f1f"/><rect x="2" y="6" width="28" height="24" rx="2" fill="#f7d774"/><path d="M8 23a2 2 0 0 1 2-2h12a2 2 0 0 1 2 2v7h-4v-5h-8v5H8z" fill="#2f8fd8"/></symbol>
    <symbol id="opera" viewBox="0 0 32 32"><ellipse cx="16" cy="16" rx="14" ry="15" fill="#d8151e"/><ellipse cx="16" cy="16" rx="6" ry="12.500" fill="#1a2530"/></symbol>
    <symbol id="firefox" viewBox="0 0 32 32"><circle cx="16" cy="16" r="14" fill="#7b3fd1"/><path d="M27 5c5 9 3 20-5 24S4 28 2 18c2 3 4 3 6 3 4 0 6-3 5-5-3-1-4-2-3-4 1-3 5-3 7-7 4 1 8 1 10 0z" fill="#f57b20"/><path d="M24 9c3 6 1 14-5 16 3-5 1-10-3-10l2-4c2 0 4-1 6-2z" fill="#ffcb2e"/></symbol>
    <symbol id="spotify" viewBox="0 0 32 32"><circle cx="16" cy="16" r="14.500" fill="#1ed760"/><path d="M7 12c6-2 13-1.500 18 1.500M8.500 16.500c5-1.500 11-1 15 1.500M10 21c4-1 8.500-.8 12 1.200" fill="none" stroke="#10202b" stroke-width="2.500" stroke-linecap="round"/></symbol>
    <symbol id="teams" viewBox="0 0 32 32"><circle cx="24" cy="7" r="4" fill="#7b83eb"/><circle cx="15" cy="7" r="4" fill="#7b83eb"/><rect x="13" y="12" width="17" height="13" rx="2" fill="#5059c9"/><rect x="2" y="10" width="16" height="16" rx="1.500" fill="#5059c9"/><text x="6" y="23" class="icon-t">T</text><circle cx="23" cy="22" r="7.500" fill="#fff" stroke="#d13438" stroke-width="2"/></symbol>
    <symbol id="q-task" viewBox="0 0 32 32"><circle cx="15" cy="14" r="10.500" fill="none" stroke="#7fa32e" stroke-width="5.500"/><path d="M18 18l9 11" stroke="#68a33b" stroke-width="5.500" stroke-linecap="round"/><path d="M13 10l6 3-3 5z" fill="#ee8a36"/></symbol>
    <symbol id="acrobat" viewBox="0 0 32 32"><rect x="2" y="2" width="28" height="28" rx="4" fill="#b30b00"/><path d="M6 23c3-1 8-9 9-16 1 7 5 12 11 12-6-1-14 0-20 4z" fill="none" stroke="#fff" stroke-width="1.800"/></symbol>
    <symbol id="palette" viewBox="0 0 32 32"><path d="M14 8C6 8 1 14 2 21c.5 5 6 8 11 7 5-1 9-5 10-10 1-6-4-10-9-10z" fill="#cfe0ea"/><circle cx="9" cy="14" r="2.200" fill="#3ab54a"/><circle cx="15" cy="12" r="2.200" fill="#f15b5b"/><circle cx="7" cy="20" r="2.200" fill="#3a8fd8"/><circle cx="20" cy="14" r="2" fill="#f5c92e"/><path d="M15 30L28 5" stroke="#e08a2c" stroke-width="2.200"/><path d="M25 8l5-6 1 8z" fill="#c49a6a"/></symbol>
    <symbol id="photos" viewBox="0 0 32 32"><rect x="3" y="1" width="26" height="30" rx="2" fill="#2f9de8"/><rect x="3" y="1" width="26" height="12" rx="2" fill="#1f6fd0"/><path d="M3 28L16 12l13 13v4a2 2 0 0 1-2 2H5a2 2 0 0 1-2-2z" fill="#6fd0f7"/><path d="M10 31l10-12 9 8v2a2 2 0 0 1-2 2z" fill="#aeeafc"/><circle cx="23" cy="7" r="2.500" fill="#fff"/></symbol>
</svg>

<header class="titlebar">
    <svg class="ic-title"><use href="#q"/></svg>
    <span class="title">*Projekt bez nazwy — QGIS</span>
    <div class="winbtns">
        <span class="winbtn"><svg width="13" height="13"><path d="M0 6.500h13" stroke="#111"/></svg></span>
        <span class="winbtn"><svg width="13" height="13"><path d="M.5 3.500h9v9h-9zM3 3.500V.5h9.500v9h-3" fill="none" stroke="#111"/></svg></span>
        <span class="winbtn"><svg width="13" height="13"><path d="M.5.500l12 12M12.500.500l-12 12" stroke="#111"/></svg></span>
    </div>
</header>

<nav class="menubar">
    <span class="menu m1"><u>P</u>rojekt</span>
    <span class="menu m2"><u>E</u>dycja</span>
    <span class="menu m3"><u>W</u>idok</span>
    <span class="menu m4">W<u>a</u>rstwa</span>
    <span class="menu m5"><u>U</u>stawienia</span>
    <span class="menu m6"><u>W</u>tyczki</span>
    <span class="menu m7">Wekt<u>o</u>r</span>
    <span class="menu m8"><u>R</u>aster</span>
    <span class="menu m9"><u>B</u>azy danych</span>
    <span class="menu m10"><u>i</u>nternet</span>
    <span class="menu m11"><u>S</u>iatka</span>
    <span class="menu m12">Pro<u>c</u>essing</span>
    <span class="menu m13"><u>P</u>omoc</span>
</nav>

<section class="toolbar">
    <span class="grip first"></span>
    <span class="tb"><svg class="ic"><use href="#new"/></svg></span>
    <span class="tb"><svg class="ic"><use href="#open"/></svg></span>
    <span class="tb"><svg class="ic"><use href="#save"/></svg></span>
    <span class="tb"><svg class="ic"><use href="#layout-new"/></svg></span>
    <span class="tb"><svg class="ic"><use href="#layout-mgr"/></svg></span>
    <span class="tb"><svg class="ic"><use href="#styles"/></svg></span>
    <span class="grip"></span>
    <span class="tb on"><svg class="ic"><use href="#hand"/></svg></span>
    <span class="tb"><svg class="ic"><use href="#pan-sel"/></svg></span>
    <span class="tb"><svg class="ic"><use href="#zoom-in"/></svg></span>
    <span class="tb"><svg class="ic"><use href="#zoom-out"/></svg></span>
    <span class="tb"><svg class="ic"><use href="#zoom-full"/></svg></span>
    <span class="tb"><svg class="ic"><use href="#zoom-sel"/></svg></span>
    <span class="tb"><svg class="ic"><use href="#zoom-layer"/></svg></span>
    <span class="tb off"><svg class="ic"><use href="#zoom-native"/></svg></span>
    <span class="tb"><svg class="ic"><use href="#zoom-last"/></svg></span>
    <span class="tb off"><svg class="ic"><use href="#zoom-next"/></svg></span>
    <span class="tb"><svg class="ic"><use href="#map-new"/></svg></span>
    <span class="tb"><svg class="ic"><use href="#map-3d"/></svg></span>
    <span class="tb"><svg class="ic"><use href="#bm-new"/></svg></span>
    <span class="tb"><svg class="ic"><use href="#bm-show"/></svg></span>
    <span class="tb"><svg class="ic"><use href="#clock"/></svg></span>
    <span class="tb"><svg class="ic"><use href="#refresh"/></svg></span>
    <span class="grip wide"></span>
    <span class="tb"><svg class="ic"><use href="#select"/></svg></span><span class="drop"></span>
    <span class="tb"><svg class="ic"><use href="#select-attr"/></svg></span><span class="drop"></span>
    <span class="tb"><svg class="ic"><use href="#deselect"/></svg></span><span class="drop"></span>
    <span class="tb"><svg class="ic"><use href="#select-loc"/></svg></span><span class="drop"></span>
    <span class="grip wide"></span>
    <span class="tb"><svg class="ic"><use href="#identify"/></svg></span>
    <span class="tb"><svg class="ic"><use href="#abacus"/></svg></span>
    <span class="tb on"><svg class="ic"><use href="#gear"/></svg></span>
    <span class="tb"><svg class="ic"><use href="#sigma"/></svg></span>
    <span class="tb"><svg class="ic"><use href="#table"/></svg></span><span class="drop"></span>
    <span class="tb"><svg class="ic"><use href="#ruler"/></svg></span><span class="drop"></span>
    <span class="tb"><svg class="ic"><use href="#tip"/></svg></span>
    <span class="tb off"><svg class="ic"><use href="#gear-play"/></svg></span><span class="drop off"></span>
</section>

<section class="toolbar">
    <span class="grip first"></span>
    <span class="tb"><svg class="ic"><use href="#dsm"/></svg></span>
    <span class="tb"><svg class="ic"><use href="#gpkg"/></svg></span>
    <span class="tb"><svg class="ic"><use href="#shp"/></svg></span>
    <span class="tb"><svg class="ic"><use href="#spatialite"/></svg></span>
    <span class="tb"><svg class="ic"><use href="#chip"/></svg></span>
    <span class="tb"><svg class="ic"><use href="#mesh"/></svg></span>
    <span class="tb"><svg class="ic"><use href="#virtual"/></svg></span>
    <span class="grip"></span>
    <span class="tb"><svg class="ic"><use href="#pencils"/></svg></span>
    <span class="tb"><svg class="ic"><use href="#pencil"/></svg></span>
    <span class="tb off"><svg class="ic"><use href="#save-edits"/></svg></span>
    <span class="tb off"><svg class="ic"><use href="#add-line"/></svg></span><span class="drop off"></span>
    <span class="tb off"><svg class="ic"><use href="#add-pts"/></svg></span>
    <span class="tb off"><svg class="ic"><use href="#vertex"/></svg></span><span class="drop off"></span>
    <span class="tb off"><svg class="ic"><use href="#edit-table"/></svg></span>
    <span class="tb off"><svg class="ic"><use href="#trash"/></svg></span>
    <span class="tb off"><svg class="ic"><use href="#cut"/></svg></span>
    <span class="tb off"><svg class="ic"><use href="#copy"/></svg></span>
    <span class="tb off"><svg class="ic"><use href="#paste"/></svg></span>
    <span class="tb off nudge3"><svg class="ic"><use href="#undo"/></svg></span>
    <span class="tb off"><svg class="ic"><use href="#redo"/></svg></span>
    <span class="grip narrow"></span>
    <span class="tb"><svg class="ic"><use href="#lbl-yellow"/></svg></span>
    <span class="tb nudge4"><svg class="ic"><use href="#diagram"/></svg></span>
    <span class="sep tight"></span>
    <span class="tb"><svg class="ic"><use href="#lbl-pin"/></svg></span>
    <span class="tb"><svg class="ic"><use href="#lbl-red"/></svg></span>
    <span class="sep"></span>
    <span class="tb"><svg class="ic"><use href="#lbl-off-pin"/></svg></span>
    <span class="tb"><svg class="ic"><use href="#lbl-off-eye"/></svg></span>
    <span class="tb"><svg class="ic"><use href="#lbl-off-move"/></svg></span>
    <span class="tb"><svg class="ic"><use href="#lbl-off-rot"/></svg></span>
    <span class="tb"><svg class="ic"><use href="#lbl-off-edit"/></svg></span>
    <span class="grip wider"></span>
    <span class="tb"><svg class="ic"><use href="#binoc"/></svg></span>
    <span class="grip"></span>
    <span class="tb"><svg class="ic"><use href="#py-console"/></svg></span>
    <span class="grip"></span>
    <span class="tb"><svg class="ic"><use href="#help"/></svg></span>
    <span class="grip"></span>
</section>

<section class="toolbar last">
    <span class="grip first"></span>
    <span class="tb"><svg class="ic"><use href="#capture"/></svg></span>
    <span class="tb off"><svg class="ic"><use href="#target"/></svg></span>
    <span class="sep loose"></span>
    <span class="tb"><svg class="ic"><use href="#georef"/></svg></span>
    <span class="tb off"><svg class="ic"><use href="#target-add"/></svg></span>
    <span class="tb"><svg class="ic"><use href="#pts-star"/></svg></span>
    <span class="tb off"><svg class="ic"><use href="#line-pin"/></svg></span>
    <span class="sep"></span>
    <span class="tb"><svg class="ic"><use href="#info"/></svg></span>
    <span class="tb"><svg class="ic"><use href="#wrench"/></svg></span>
</section>

<main class="workspace">
    <aside class="dock-left">
        <div class="dock-title">
            <span>Przeglądarka</span>
            <span class="dock-btn"><svg width="14" height="14"><rect x=".5" y=".5" width="13" height="13" rx="2" fill="none" stroke="#777"/><path d="M5.500 3h5v5h-5zM3.500 6h4.500v5h-4.500z" fill="#f0f0f0" stroke="#555"/></svg></span>
            <span class="dock-btn"><svg width="14" height="14"><rect x=".5" y=".5" width="13" height="13" rx="2" fill="none" stroke="#777"/><path d="M4 4l6 6M10 4l-6 6" stroke="#444" stroke-width="2.200"/></svg></span>
        </div>
        <div class="dock-tools">
            <span class="pt"><svg class="ic20"><use href="#add-sq"/></svg></span>
            <span class="pt"><svg class="ic20"><use href="#refresh"/></svg></span>
            <span class="pt"><svg class="ic20"><use href="#funnel"/></svg></span>
            <span class="pt"><svg class="ic20"><use href="#collapse"/></svg></span>
            <span class="pt"><svg class="ic20"><use href="#info"/></svg></span>
        </div>
        <div class="browser">
            <div class="tree">
                <div class="row"><span class="tri"></span><svg class="ic20"><use href="#b-folder"/></svg><span>D:\ (DATA)</span></div>
                <div class="row"><span class="tri none"></span><svg class="ic20"><use href="#b-gpkg"/></svg><span>GeoPackage</span></div>
                <div class="row"><span class="tri none"></span><svg class="ic20"><use href="#feather"/></svg><span>SpatiaLite</span></div>
                <div class="row"><span class="tri none"></span><svg class="ic20"><use href="#b-pg"/></svg><span>PostgreSQL</span></div>
                <div class="row"><span class="tri none"></span><svg class="ic20"><use href="#b-hana"/></svg><span>SAP HANA</span></div>
                <div class="row"><span class="tri none"></span><svg class="ic20"><use href="#b-mssql"/></svg><span>MS SQL Server</span></div>
                <div class="row"><span class="tri none"></span><svg class="ic20"><use href="#b-oracle"/></svg><span>Oracle</span></div>
                <div class="row"><span class="tri"></span><svg class="ic20"><use href="#b-globe"/></svg><span>WMS/WMTS</span></div>
                <div class="row"><span class="tri none"></span><svg class="ic20"><use href="#b-cube"/></svg><span>Sceny</span></div>
                <div class="row"><span class="tri none"></span><svg class="ic20"><use href="#b-grid"/></svg><span>Vector Tiles</span></div>
                <div class="row"><span class="tri"></span><svg class="ic20"><use href="#b-xyz"/></svg><span>XYZ Tiles</span></div>
                <div class="row"><span class="tri none"></span><svg class="ic20"><use href="#b-wcs"/></svg><span>WCS</span></div>
                <div class="row"><span class="tri none"></span><svg class="ic20"><use href="#b-wfs"/></svg><span>WFS / OGC API - Features</span></div>
                <div class="row"><span class="tri none"></span><svg class="ic20"><use href="#b-arc"/></svg><span>Serwery REST ArcGIS</span></div>
            </div>
            <div class="vscroll">
                <span class="sb-btn"><i class="sb-up"></i></span>
                <span class="sb-thumb"></span>
                <span class="sb-rest"></span>
                <span class="sb-btn"><i class="sb-down"></i></span>
            </div>
        </div>
        <div class="splitter"></div>
        <div class="dock-title title2">
            <span>Warstwy</span>
            <span class="dock-btn"><svg width="14" height="14"><rect x=".5" y=".5" width="13" height="13" rx="2" fill="none" stroke="#777"/><path d="M5.500 3h5v5h-5zM3.500 6h4.500v5h-4.500z" fill="#f0f0f0" stroke="#555"/></svg></span>
            <span class="dock-btn"><svg width="14" height="14"><rect x=".5" y=".5" width="13" height="13" rx="2" fill="none" stroke="#777"/><path d="M4 4l6 6M10 4l-6 6" stroke="#444" stroke-width="2.200"/></svg></span>
        </div>
        <div class="dock-tools tools2">
            <span class="pt"><svg class="ic20"><use href="#paint"/></svg></span>
            <span class="pt"><svg class="ic20"><use href="#addgrp"/></svg></span>
            <span class="pt"><svg class="ic20"><use href="#eye"/></svg></span>
            <span class="pt"><svg class="ic20"><use href="#funnel"/></svg></span>
            <span class="pt"><svg class="ic20"><use href="#epsilon"/></svg></span><span class="drop small"></span>
            <span class="pt"><svg class="ic20"><use href="#expand"/></svg></span>
            <span class="pt"><svg class="ic20"><use href="#collapse"/></svg></span>
            <span class="pt"><svg class="ic20"><use href="#rem-sq"/></svg></span>
        </div>
        <div class="layers">
            <div class="layer">
                <span class="chk"></span>
                <span class="sym"><svg class="ic20"><path d="M0 10h20" stroke="#f19aa4" stroke-width="2"/><path d="M3 19l1-5L14 1l4 3L7 16z" fill="#e8702a" stroke="#8a4a1d"/></svg></span>
                <span class="lname">railroads_matanuska</span>
            </div>
            <div class="layer current">
                <span class="chk tick"><svg width="14" height="14"><path d="M2 7.500l3.500 4.500L12 2" fill="none" stroke="#111" stroke-width="2.200"/></svg></span>
                <span class="sym"><span class="pt-sym"></span></span>
                <span class="lname act">airports</span>
                <span class="fbtn"><svg class="ic16"><use href="#funnel-o"/></svg></span>
            </div>
            <div class="layer">
                <span class="chk"></span>
                <span class="sym"><span class="line-sym"></span></span>
                <span class="lname">railroads</span>
            </div>
            <div class="layer">
                <span class="chk"></span>
                <span class="sym"><span class="poly-sym"></span></span>
                <span class="lname">regions</span>
                <span class="fbtn"><svg class="ic16"><use href="#funnel-o"/></svg></span>
            </div>
        </div>
    </aside>

    <div class="map">
        <span class="pin p1"></span>
        <span class="pin p2"></span>
        <span class="pin p3"></span>
        <span class="pin p4"></span>
        <span class="pin p5"></span>
        <span class="pin p6"></span>
        <span class="pin p7"></span>
    </div>

    <aside class="dock-right">
        <div class="dock-title right">
            <span>Algorytmy przetwarzania</span>
            <span class="dock-btn"><svg width="14" height="14"><rect x=".5" y=".5" width="13" height="13" rx="2" fill="none" stroke="#777"/><path d="M5.500 3h5v5h-5zM3.500 6h4.500v5h-4.500z" fill="#f0f0f0" stroke="#555"/></svg></span>
            <span class="dock-btn"><svg width="14" height="14"><rect x=".5" y=".5" width="13" height="13" rx="2" fill="none" stroke="#777"/><path d="M4 4l6 6M10 4l-6 6" stroke="#444" stroke-width="2.200"/></svg></span>
        </div>
        <div class="dock-tools algo">
            <span class="pa"><svg class="ic20"><use href="#gears"/></svg></span>
            <span class="pa"><svg class="ic20"><use href="#python"/></svg></span>
            <span class="pa"><svg class="ic20"><use href="#clock"/></svg></span>
            <span class="pa"><svg class="ic20"><use href="#doc"/></svg></span>
            <span class="sep short"></span>
            <span class="pa"><svg class="ic20"><use href="#note"/></svg></span>
            <span class="sep short"></span>
            <span class="pa"><svg class="ic20"><use href="#wrench"/></svg></span>
        </div>
        <div class="search"><svg class="ic16"><use href="#magn-grey"/></svg><span>Szukaj...</span></div>
        <div class="algos">
            <div class="row"><span class="tri"></span><svg class="ic20"><use href="#clock"/></svg><span>Ostatnio używane</span></div>
            <div class="row"><span class="tri"></span><svg class="ic20"><use href="#q"/></svg><span>Chmura punktów — konwersja</span></div>
            <div class="row"><span class="tri"></span><svg class="ic20"><use href="#q"/></svg><span>Chmura punktów — pozyskiwanie danych</span></div>
            <div class="row"><span class="tri"></span><svg class="ic20"><use href="#q"/></svg><span>Chmura punktów — zarządzanie danymi</span></div>
            <div class="row"><span class="tri"></span><svg class="ic20"><use href="#q"/></svg><span>Database</span></div>
            <div class="row"><span class="tri"></span><svg class="ic20"><use href="#q"/></svg><span>GPS</span></div>
            <div class="row"><span class="tri"></span><svg class="ic20"><use href="#q"/></svg><span>Interpolacje</span></div>
            <div class="row"><span class="tri"></span><svg class="ic20"><use href="#q"/></svg><span>Kafle 3D</span></div>
            <div class="row"><span class="tri"></span><svg class="ic20"><use href="#q"/></svg><span>Kafle wektorowe</span></div>
            <div class="row"><span class="tri"></span><svg class="ic20"><use href="#q"/></svg><span>Kartografia</span></div>
            <div class="row"><span class="tri"></span><svg class="ic20"><use href="#q"/></svg><span>Pliki</span></div>
            <div class="row"><span class="tri"></span><svg class="ic20"><use href="#q"/></svg><span>Raster — analiza</span></div>
            <div class="row"><span class="tri"></span><svg class="ic20"><use href="#q"/></svg><span>Raster — analiza terenu</span></div>
            <div class="row"><span class="tri"></span><svg class="ic20"><use href="#q"/></svg><span>Raster — narzędzia</span></div>
            <div class="row"><span class="tri"></span><svg class="ic20"><use href="#q"/></svg><span>Raster — tworzenie</span></div>
            <div class="row"><span class="tri"></span><svg class="ic20"><use href="#q"/></svg><span>Siatka</span></div>
            <div class="row"><span class="tri"></span><svg class="ic20"><use href="#q"/></svg><span>Warstwa - narzędzia</span></div>
            <div class="row"><span class="tri"></span><svg class="ic20"><use href="#q"/></svg><span>Wektor</span></div>
            <div class="row"><span class="tri"></span><svg class="ic20"><use href="#q"/></svg><span>Wektor — algebra mapowa</span></div>
            <div class="row"><span class="tri"></span><svg class="ic20"><use href="#q"/></svg><span>Wektor — analiza</span></div>
            <div class="row"><span class="tri"></span><svg class="ic20"><use href="#q"/></svg><span>Wektor — analiza sieciowa</span></div>
            <div class="row"><span class="tri"></span><svg class="ic20"><use href="#q"/></svg><span>Wektor — geometria</span></div>
            <div class="row"><span class="tri"></span><svg class="ic20"><use href="#q"/></svg><span>Wektor — tabela atrybutów</span></div>
            <div class="row"><span class="tri"></span><svg class="ic20"><use href="#q"/></svg><span>Wektor — tworzenie</span></div>
            <div class="row"><span class="tri"></span><svg class="ic20"><use href="#q"/></svg><span>Wektor — wybór</span></div>
            <div class="row"><span class="tri"></span><svg class="ic20"><use href="#q"/></svg><span>Wykresy</span></div>
            <div class="row"><span class="tri"></span><svg class="ic20"><use href="#gdal"/></svg><span>GDAL</span></div>
            <div class="row"><span class="tri"></span><svg class="ic20"><use href="#grass"/></svg><span>GRASS</span></div>
        </div>
    </aside>
</main>

<footer class="statusbar">
    <span class="locator"></span>
    <span class="msg">Przesunięto o 335,087 km (81,42534°W)</span>
    <span class="st-label coord-l">Współrzędne</span>
    <span class="field coord">711942&nbsp; 2436747</span>
    <svg class="mouse" width="20" height="22"><path d="M3 3c4-3 9 2 13 10 1 5-4 8-8 6S1 7 3 3z" fill="#fff" stroke="#111" stroke-width="2"/><path d="M5 5l9 11M10 5l-4 5" stroke="#111" stroke-width="2"/><circle cx="10" cy="15" r="2" fill="#111"/></svg>
    <span class="st-label skala-l">Skala</span>
    <span class="combo"><span class="combo-val">:17561298</span><span class="combo-btn"><i class="sb-down"></i></span></span>
    <svg class="lock" width="16" height="20"><path d="M4 9V5.500a4 4 0 0 1 8 0V9" fill="none" stroke="#888" stroke-width="2"/><rect x="1" y="8" width="14" height="11" rx="1.500" fill="#666"/></svg>
    <span class="st-label pow-l">Powiększenie</span>
    <span class="spin s-pow"><span class="spin-val">100%</span><span class="spin-btns"><i class="sb-up"></i><i class="sb-down"></i></span></span>
    <span class="st-label ob-l">Obrót</span>
    <span class="spin s-ob"><span class="spin-val">0,0 °</span><span class="spin-btns"><i class="sb-up"></i><i class="sb-down"></i></span></span>
    <span class="chk render"><svg width="14" height="14"><path d="M2 7.500l3.500 4.500L12 2" fill="none" stroke="#111" stroke-width="2.200"/></svg></span>
    <span class="st-label rend-l">Renderuj</span>
    <svg class="epsg-ic" width="18" height="18"><use href="#b-wcs"/></svg>
    <span class="st-label epsg">EPSG:2964</span>
    <svg class="chat" width="22" height="22"><path d="M11 1c6 0 10 4 10 9s-4 9-10 9c-1 0-2 0-3-.500L6 21l.5-4C3 15 1 13 1 10c0-5 4-9 10-9z" fill="#666"/><circle cx="7" cy="10" r="1.300" fill="#fff"/><circle cx="11" cy="10" r="1.300" fill="#fff"/><circle cx="15" cy="10" r="1.300" fill="#fff"/></svg>
</footer>

<div class="taskbar">
    <span class="start"><svg class="ic-win"><use href="#win"/></svg></span>
    <span class="tsearch"><svg class="ic-glass"><use href="#searchglass"/></svg><span>Wyszukaj</span></span>
    <span class="task view"><svg class="ic-view"><use href="#taskview"/></svg></span>
    <span class="task run"><svg class="ic"><use href="#explorer"/></svg></span>
    <span class="task"><svg class="ic"><use href="#opera"/></svg></span>
    <span class="task run"><svg class="ic"><use href="#firefox"/></svg></span>
    <span class="task"><svg class="ic"><use href="#spotify"/></svg></span>
    <span class="task run"><svg class="ic"><use href="#teams"/></svg></span>
    <span class="task active"><svg class="ic"><use href="#q-task"/></svg></span>
    <span class="task run"><svg class="ic"><use href="#acrobat"/></svg></span>
    <span class="task run"><svg class="ic"><use href="#palette"/></svg></span>
    <span class="task run"><svg class="ic"><use href="#photos"/></svg></span>
    <span class="weather">6°C Lekki deszcz</span>
    <svg class="tray chevron" width="16" height="10"><path d="M1 9l7-8 7 8" fill="none" stroke="#fff" stroke-width="1.200"/></svg>
    <svg class="tray meet" width="16" height="22"><rect x="1.500" y="5" width="9" height="12" rx="3" fill="none" stroke="#fff"/><path d="M10.500 9l4-2v8l-4-2M3 2.500h6M3 19.500h6" fill="none" stroke="#fff"/></svg>
    <svg class="tray batt" width="20" height="16"><path d="M1 4h4M3 1v5" stroke="#fff"/><rect x="4" y="5" width="15" height="9" fill="#fff" stroke="#fff"/></svg>
    <svg class="tray snd" width="18" height="16"><path d="M1 5h3l4-3v12l-4-3H1z" fill="none" stroke="#fff"/><path d="M11 5l6 6M17 5l-6 6" stroke="#fff"/></svg>
    <svg class="tray wifi" width="18" height="18"><path d="M2 16A14 14 0 0 1 16 2M6 16A10 10 0 0 1 16 6M10 16A6 6 0 0 1 16 10" fill="none" stroke="#aab" stroke-width="1.200"/><circle cx="15" cy="15" r="1.500" fill="#fff"/></svg>
    <span class="clock"><span>10:52</span><span>18.11.2024</span></span>
    <svg class="tray notify" width="20" height="20"><path d="M.5.500h19v15h-7l-2.500 3-2.500-3h-7z" fill="none" stroke="#fff"/></svg>
</div>

<div class="preview">
    <svg class="ic20 pv-q"><use href="#q"/></svg>
    <svg class="pv-copy" width="12" height="14"><path d="M.5 3.500h8v10h-8zM3 3.500v-3h8.500v10h-3" fill="#fff" stroke="#999"/></svg>
    <svg class="pv-sq" width="12" height="14"><rect x=".5" y=".5" width="11" height="13" fill="none" stroke="#999"/></svg>
    <svg class="pv-x" width="14" height="14"><path d="M1 1l12 12M13 1L1 13" stroke="#999"/></svg>
</div>
</body>
</html>
```

FILE: styles.css
```css
* {
    margin: 0;
    padding: 0;
    box-sizing: border-box;
}

html, body {
    width: 1920px;
    height: 1080px;
    overflow: hidden;
}

body {
    display: flex;
    flex-direction: column;
    font-family: "Noto Sans", "Open Sans", sans-serif;
    font-size: 14px;
    color: #111;
    background: #f0f0f0;
    position: relative;
}

.sprite {
    display: none;
}

/* text inside svg icons */
.tag-text { font: bold 11px "Liberation Sans", sans-serif; }
.icon-a { font: 16px "Liberation Sans", sans-serif; fill: #333; }
.icon-11 { font: bold 9px "Liberation Sans", sans-serif; fill: #888; }
.icon-i { font: italic bold 20px "Liberation Serif", serif; fill: #fff; }
.icon-help { font: 20px "Liberation Sans", sans-serif; fill: #fff; }
.icon-eps { font: 22px "Liberation Serif", serif; fill: #6d2c91; }
.icon-gdal { font: bold 9px "Liberation Sans", sans-serif; fill: #111; }
.icon-t { font: bold 14px "Liberation Sans", sans-serif; fill: #fff; }

.ic { width: 32px; height: 32px; flex-shrink: 0; }
.ic20 { width: 20px; height: 20px; flex-shrink: 0; }
.ic16 { width: 16px; height: 16px; flex-shrink: 0; }

/* title bar */
.titlebar {
    height: 29px;
    display: flex;
    align-items: center;
    background: #fff;
    padding-left: 3px;
    flex-shrink: 0;
}

.ic-title { width: 19px; height: 19px; }

.title {
    margin-left: 5px;
    font-size: 14px;
}

.winbtns {
    margin-left: auto;
    display: flex;
    padding-right: 4px;
}

.winbtn {
    width: 58px;
    height: 29px;
    display: flex;
    align-items: center;
    justify-content: center;
}

/* menu */
.menubar {
    height: 25px;
    display: flex;
    align-items: center;
    background: #f0f0f0;
    border-bottom: 1px solid #d6d6d6;
    padding-left: 13px;
    flex-shrink: 0;
}

.menu { white-space: nowrap; }
.m2 { margin-left: 19px; }
.m3 { margin-left: 19px; }
.m4 { margin-left: 18px; }
.m5 { margin-left: 18px; }
.m6 { margin-left: 17.5px; }
.m7 { margin-left: 18px; }
.m8 { margin-left: 18px; }
.m9 { margin-left: 17px; }
.m10 { margin-left: 19px; }
.m11 { margin-left: 16.5px; }
.m12 { margin-left: 18px; }
.m13 { margin-left: 19px; }

/* toolbars */
.toolbar {
    height: 49px;
    display: flex;
    align-items: center;
    background: linear-gradient(#fbfbfb, #efefef);
    border-bottom: 1px solid #bdbdbd;
    flex-shrink: 0;
}

.toolbar.last {
    height: 48px;
    border-bottom: 2px solid #b9b9b9;
}

.tb {
    width: 41.2px;
    height: 47px;
    padding-top: 1px;
    display: flex;
    align-items: center;
    justify-content: center;
    flex-shrink: 0;
}

.tb.on {
    background: #dcdcdc;
    border: 1px solid #aeaeae;
    border-radius: 3px;
    width: 39px;
    margin: 0 1.1px;
}

.tb.off svg {
    opacity: .35;
    filter: grayscale(1);
}

.tb.nudge3 { margin-left: 3px; }
.tb.nudge4 { margin-left: 4px; }

.grip {
    width: 20px;
    height: 30px;
    flex-shrink: 0;
    background: radial-gradient(circle, #b5b5b5 .7px, transparent 1px) center / 3.5px 5px;
    background-clip: content-box;
    padding: 0 7px;
}

.grip.first {
    width: 16px;
    padding: 0 6px 0 5px;
}

.grip.wide { width: 22.5px; padding: 0 8px; }
.grip.wider { width: 23px; padding: 0 8px; }
.grip.narrow { width: 17px; padding: 0 6px; }

.drop {
    width: 14.5px;
    height: 8px;
    flex-shrink: 0;
    background: #666;
    clip-path: polygon(1.5px 1px, 11.5px 1px, 6.5px 7px);
}

.drop.off { background: #b5b5b5; }

.drop.small {
    width: 12px;
    clip-path: polygon(0 1px, 10px 1px, 5px 7px);
}

.sep {
    width: 8px;
    height: 28px;
    flex-shrink: 0;
    background: linear-gradient(#d2d2d2, #d2d2d2) center / 1px 100% no-repeat;
}

.sep.tight { width: 6.4px; }
.sep.loose { width: 10px; }

.sep.short {
    width: 0;
    height: 20px;
    margin: 0 4px;
    border-left: 1px solid #d2d2d2;
    background: none;
}

/* main area */
.workspace {
    height: 794px;
    display: flex;
    flex-shrink: 0;
}

.dock-left {
    width: 347px;
    display: flex;
    flex-direction: column;
    flex-shrink: 0;
}

.dock-title {
    height: 29px;
    display: flex;
    align-items: center;
    padding: 0 2px 0 5px;
    width: 338px;
    gap: 4px;
}

.dock-title > span:first-child {
    margin-right: auto;
}

.dock-btn {
    width: 14px;
    height: 14px;
    display: flex;
    margin-top: -2px;
}

.dock-tools {
    height: 28px;
    margin-bottom: 7px;
    display: flex;
    align-items: center;
    padding-left: 4px;
}

.pt {
    width: 31.5px;
    display: flex;
    justify-content: center;
}

.browser {
    height: 333px;
    width: 338px;
    display: flex;
    border-top: 1px solid #b5b5b5;
    border-left: 1px solid #c4c4c4;
    background: #fff;
}

.tree {
    flex: 1;
    padding-top: 1px;
}

.row {
    height: 22.46px;
    display: flex;
    align-items: center;
    white-space: nowrap;
}

.tri {
    width: 0;
    height: 0;
    flex-shrink: 0;
    margin: 0 11px 0 7px;
    border-left: 6px solid #666;
    border-top: 5px solid transparent;
    border-bottom: 5px solid transparent;
}

.tri.none { border-left-color: transparent; }

.row svg { margin-right: 8px; }

.vscroll {
    width: 18px;
    display: flex;
    flex-direction: column;
    border-left: 1px solid #b5b5b5;
    background: linear-gradient(90deg, #f3f3f3, #fdfdfd);
}

.sb-btn {
    height: 17px;
    display: flex;
    align-items: center;
    justify-content: center;
}

.sb-thumb {
    height: 65px;
    background: #e6e6e6;
    border-top: 1px solid #d8d8d8;
}

.sb-rest { flex: 1; border-bottom: 1px solid #d8d8d8; }

.sb-up, .sb-down {
    display: block;
    width: 0;
    height: 0;
    border-left: 5px solid transparent;
    border-right: 5px solid transparent;
}

.sb-up { border-bottom: 5px solid #666; }
.sb-down { border-top: 5px solid #666; }

.splitter {
    height: 8px;
    width: 338px;
    background: radial-gradient(circle, #b5b5b5 .8px, transparent 1px) center / 4px 4px repeat-x;
    background-clip: content-box;
    padding: 0 150px;
}

.title2 { height: 25px; }
.tools2 { height: 34px; margin-bottom: 4px; }

.layers {
    height: 326px;
    width: 338px;
    background: #fff;
    padding-top: 1px;
}

.layer {
    height: 22.5px;
    display: flex;
    align-items: center;
    padding-left: 30px;
}

.layer.current { background: #f0f0f0; }

.chk {
    width: 18px;
    height: 18px;
    flex-shrink: 0;
    background: #fff;
    border: 1px solid #c8c8c8;
    border-radius: 1px;
    display: flex;
    align-items: center;
    justify-content: center;
}

.chk.tick { background: #f0f0f0; }

.sym {
    width: 20px;
    margin: 0 7px;
    display: flex;
    justify-content: center;
    flex-shrink: 0;
}

.pt-sym {
    width: 10px;
    height: 10px;
    border-radius: 50%;
    background: #dd4f80;
    border: 1px solid #9b3459;
}

.line-sym {
    width: 20px;
    height: 2px;
    background: #3f9f3b;
}

.poly-sym {
    width: 20px;
    height: 20px;
    background: #f2a3b2;
    border: 1px solid #444;
}

.lname {
    font-weight: 700;
    font-style: italic;
    color: #7b7b7b;
    font-size: 14.8px;
}

.lname.act {
    font-style: normal;
    color: #111;
    font-size: 14.4px;
    text-decoration: underline;
}

.fbtn {
    margin-left: auto;
    margin-right: 6px;
    width: 21px;
    height: 21px;
    background: #f4f4f4;
    border: 1px solid #ddd;
    display: flex;
    align-items: center;
    justify-content: center;
}

.map {
    width: 1192px;
    background: #fff;
    border-top: 2px solid #f0f0f0;
    border-bottom: 1px solid #bdbdbd;
    position: relative;
    flex-shrink: 0;
}

.pin {
    position: absolute;
    width: 11px;
    height: 11px;
    border-radius: 50%;
    background: #d03c69;
    border: 1px solid #7d2440;
}

.p1 { left: 566px; top: 198px; }
.p2 { left: 684px; top: 182px; }
.p3 { left: 690px; top: 187px; }
.p4 { left: 711px; top: 204px; }
.p5 { left: 664px; top: 292px; }
.p6 { left: 583px; top: 351px; }
.p7 { left: 335px; top: 513px; }

.dock-right {
    flex: 1;
    display: flex;
    flex-direction: column;
    min-width: 0;
}

.dock-title.right {
    width: 100%;
    padding-left: 14px;
    padding-right: 1px;
}

.algo { padding-left: 14px; }

.pa {
    width: 31px;
    display: flex;
    justify-content: center;
}

.search {
    height: 28px;
    margin-left: 9px;
    display: flex;
    align-items: center;
    gap: 10px;
    padding-left: 9px;
    background: #fff;
    border: 1px solid #9a9a9a;
    border-radius: 2px;
    color: #777;
    font-size: 13px;
}

.algos {
    flex: 1;
    margin-left: 10px;
    background: #fff;
    padding-top: 1px;
    border-bottom: 1px solid #bdbdbd;
}

.algos .row {
    height: 22.5px;
}

.algos .tri {
    margin: 0 14px 0 9px;
}

.algos .row svg { margin-right: 7px; }

/* status bar */
.statusbar {
    height: 36px;
    padding-top: 2px;
    display: flex;
    align-items: center;
    background: #f0f0f0;
    flex-shrink: 0;
    font-size: 13.5px;
    white-space: nowrap;
}

.locator {
    margin-left: 5px;
    width: 250px;
    height: 27px;
    margin-top: -2px;
    background: #fff;
    border: 1px solid #aaa;
    border-radius: 3px;
    flex-shrink: 0;
}

.msg { margin-left: 10px; width: 628px; flex-shrink: 0; }

.field, .combo, .spin {
    height: 27px;
    margin-top: -2px;
    background: #fff;
    border: 1px solid #bbb;
    border-radius: 3px;
    display: flex;
    align-items: center;
    flex-shrink: 0;
}

.st-label { flex-shrink: 0; }
.coord-l { width: 82px; }
.coord { width: 133px; justify-content: center; padding-top: 2px; }
.mouse { margin-left: 5px; flex-shrink: 0; }
.skala-l { margin-left: 16px; width: 36px; }
.combo { width: 96px; }
.combo-val { width: 72px; padding-left: 1px; padding-top: 2px; }
.combo-btn {
    flex: 1;
    height: 100%;
    background: #f0f0f0;
    border-left: 1px solid #bbb;
    display: flex;
    align-items: center;
    justify-content: center;
}
.lock { margin-left: 16px; flex-shrink: 0; }
.pow-l { margin-left: 12px; width: 81px; letter-spacing: -.2px; }
.s-pow { width: 101px; }
.ob-l { margin-left: 14.5px; width: 46px; }
.s-ob { width: 100px; }
.spin-val { flex: 1; padding-left: 6px; padding-top: 2px; }
.spin-btns {
    width: 18px;
    height: 100%;
    border-left: 1px solid #bbb;
    display: flex;
    flex-direction: column;
    align-items: center;
    justify-content: center;
    gap: 3px;
}
.render { margin-left: 8px; margin-top: -2px; }
.rend-l { margin-left: 7px; width: 76px; }
.epsg-ic { flex-shrink: 0; width: 18px; height: 18px; margin-top: -2px; }
.epsg { margin-left: 1px; width: 95px; }
.chat { flex-shrink: 0; margin-top: -2px; }

/* windows taskbar */
.taskbar {
    height: 50px;
    display: flex;
    align-items: center;
    background: #1a2530;
    flex-shrink: 0;
    color: #fff;
}

.start {
    width: 60px;
    height: 100%;
    display: flex;
    align-items: center;
    justify-content: center;
    flex-shrink: 0;
}

.ic-win { width: 21px; height: 21px; }

.tsearch {
    width: 360px;
    height: 100%;
    background: #f0f0f0;
    color: #222;
    display: flex;
    align-items: center;
    padding-left: 15px;
    gap: 11px;
    font-size: 18px;
    flex-shrink: 0;
}

.ic-glass { width: 24px; height: 24px; }

.task {
    width: 62.1px;
    height: 100%;
    display: flex;
    align-items: center;
    justify-content: center;
    flex-shrink: 0;
}

.task.view { width: 63px; }
.ic-view { width: 20px; height: 20px; margin-right: 4px; }

.task.run {
    background: linear-gradient(#f59ad2, #f59ad2) center bottom / 51px 3px no-repeat;
}

.task.active {
    background: linear-gradient(#f59ad2, #f59ad2) center bottom / 61px 3px no-repeat, #4a5359;
}

.weather {
    margin-left: 380px;
    width: 196px;
    color: #1f2b37;
    font-size: 17px;
    flex-shrink: 0;
}

.tray { flex-shrink: 0; }
.chevron { margin-left: 6px; }
.meet { margin-left: 14px; }
.batt { margin-left: 12px; }
.snd { margin-left: 10px; }
.wifi { margin-left: 14px; }

.clock {
    width: 74px;
    margin-left: 13px;
    display: flex;
    flex-direction: column;
    align-items: center;
    gap: 7px;
    font-size: 14px;
    line-height: 17px;
    flex-shrink: 0;
    color: #e8e8e8;
}

.notify { margin-left: 21px; }

/* taskbar hover thumbnail left on top of the status bar */
.preview {
    position: absolute;
    left: 8px;
    top: 996px;
    width: 182px;
    height: 34px;
    background: #fff;
    border: 1px solid #a6a6a6;
    border-bottom: none;
    box-shadow: 0 0 12px rgba(0, 0, 0, .25);
    display: flex;
    align-items: center;
}

.pv-q { margin-left: 9px; }
.pv-copy { margin-left: -2px; }
.pv-sq { margin-left: 46px; }
.pv-x { margin-left: 46px; }
```
